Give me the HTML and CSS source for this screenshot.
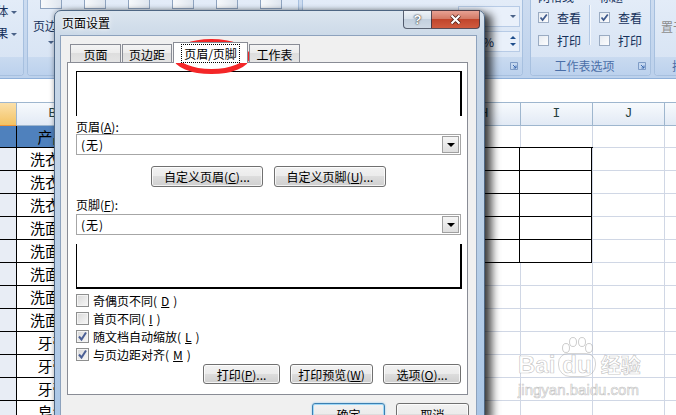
FILE: index.html
```html
<!DOCTYPE html>
<html lang="zh-CN">
<head>
  <meta charset="UTF-8" />
  <meta name="viewport" content="width=device-width, initial-scale=1" />
  <title>页面设置</title>
  <link rel="stylesheet" href="styles.css">
</head>
<body>
  <div class="excel">
    <div class="ribbon">
      <div class="group g-theme">
        <div class="group-body">
          <div class="small-btn">字体 <i class="drop"></i></div>
          <div class="small-btn">效果 <i class="drop"></i></div>
        </div>
        <div class="group-label">主题</div>
      </div>

      <div class="group g-page">
        <div class="group-body big-row">
          <div class="big-btn"><span class="big-icon"></span><span>页边距</span><i class="drop"></i></div>
          <div class="big-btn"><span class="big-icon"></span></div>
          <div class="big-btn"><span class="big-icon"></span></div>
          <div class="big-btn"><span class="big-icon"></span></div>
          <div class="big-btn"><span class="big-icon"></span></div>
          <div class="big-btn"><span class="big-icon"></span></div>
        </div>
        <div class="group-label"></div>
      </div>

      <div class="group g-fit">
        <div class="group-body fit-rows">
          <div class="fit-row"><span class="fit-box"><i class="drop"></i></span></div>
          <div class="fit-row"><span class="fit-box">100%<span class="spin"><i class="up"></i><i class="drop"></i></span></span></div>
        </div>
        <div class="group-label">
          <svg class="launcher" width="8" height="8"><path d="M0.5 0.5h7v7h-7z" fill="none" stroke="#7f9cc6"/><path d="M3 3l3 3M6 3.5V6H3.5" stroke="#3d6bb0" fill="none"/></svg>
        </div>
      </div>

      <div class="group g-sheet">
        <div class="group-body sheet-opts">
          <div class="opt-col">
            <div class="opt-title">网格线</div>
            <div class="rb-check"><span class="rb-box"><svg width="9" height="9"><path d="M1.5 4.5L3.6 7L7.8 1.5" fill="none" stroke="#3f5a8c" stroke-width="1.8"/></svg></span>查看</div>
            <div class="rb-check"><span class="rb-box"></span>打印</div>
          </div>
          <div class="opt-sep"></div>
          <div class="opt-col">
            <div class="opt-title">标题</div>
            <div class="rb-check"><span class="rb-box"><svg width="9" height="9"><path d="M1.5 4.5L3.6 7L7.8 1.5" fill="none" stroke="#3f5a8c" stroke-width="1.8"/></svg></span>查看</div>
            <div class="rb-check"><span class="rb-box"></span>打印</div>
          </div>
        </div>
        <div class="group-label label-sheet">工作表选项
          <svg class="launcher" width="8" height="8"><path d="M0.5 0.5h7v7h-7z" fill="none" stroke="#7f9cc6"/><path d="M3 3l3 3M6 3.5V6H3.5" stroke="#3d6bb0" fill="none"/></svg>
        </div>
      </div>

      <div class="group g-arrange">
        <div class="group-body arrange">置于顶层</div>
        <div class="group-label">排列</div>
      </div>
    </div>

    <div class="formula"></div>

    <div class="colheads">
      <span class="colhead sel">A</span>
      <span class="colhead">B</span>
      <span class="colhead">C</span>
      <span class="colhead">D</span>
      <span class="colhead">E</span>
      <span class="colhead">F</span>
      <span class="colhead">G</span>
      <span class="colhead">H</span>
      <span class="colhead">I</span>
      <span class="colhead">J</span>
      <span class="colhead">K</span>
    </div>

    <div class="cells">
      <div class="ruled">
        <span></span><span></span>
        <span></span><span></span>
        <span></span><span></span>
        <span></span><span></span>
        <span></span><span></span>
      </div>

      <span class="cell-a head-cell"></span><span class="cell-b head-cell">产品</span>
      <span class="cell-a"></span><span class="cell-b">洗衣粉</span>
      <span class="cell-a"></span><span class="cell-b">洗衣粉</span>
      <span class="cell-a"></span><span class="cell-b">洗衣粉</span>
      <span class="cell-a"></span><span class="cell-b">洗面奶</span>
      <span class="cell-a"></span><span class="cell-b">洗面奶</span>
      <span class="cell-a"></span><span class="cell-b">洗面奶</span>
      <span class="cell-a"></span><span class="cell-b">洗面奶</span>
      <span class="cell-a"></span><span class="cell-b">洗面奶</span>
      <span class="cell-a"></span><span class="cell-b">牙膏</span>
      <span class="cell-a"></span><span class="cell-b">牙膏</span>
      <span class="cell-a"></span><span class="cell-b">牙膏</span>
      <span class="cell-a"></span><span class="cell-b">皂角</span>
    </div>
  </div>

  <!-- watermark -->
  <div class="watermark">
    <div class="wm-logo">Bai<span class="wm-du">du<svg class="wm-toes" width="34" height="16"><ellipse cx="6" cy="11" rx="3.5" ry="4.5"/><ellipse cx="13" cy="5" rx="3.5" ry="4.5"/><ellipse cx="22" cy="5" rx="3.5" ry="4.5"/><ellipse cx="29" cy="11" rx="3.5" ry="4.5"/></svg></span><span class="wm-cn">经验</span></div>
    <div class="wm-url">jingyan.baidu.com</div>
  </div>

  <!-- dialog -->
  <div class="dialog">
    <div class="titlebar">
      <span class="title">页面设置</span>
      <div class="caption-btns">
        <span class="cap-help">?</span>
        <span class="cap-close"><svg width="13" height="11"><path d="M2.5 1.5l8 8M10.5 1.5l-8 8" stroke="#4a1a12" stroke-width="3.8"/><path d="M2.5 1.5l8 8M10.5 1.5l-8 8" stroke="#fff" stroke-width="2.2"/></svg></span>
      </div>
    </div>

    <div class="client">
      <div class="tabs">
        <span class="tab t-page">页面</span>
        <span class="tab t-margin">页边距</span>
        <span class="tab tab-active"><span class="focus">页眉/页脚</span></span>
        <span class="tab t-sheet">工作表</span>
      </div>

      <div class="panel">
        <div class="preview preview-head"></div>

        <div class="field-label">页眉(<u>A</u>):</div>
        <div class="combo"><span class="combo-text">(无)</span><span class="combo-btn"><i></i></span></div>

        <div class="custom-row">
          <button class="btn btn-custom">自定义页眉(<u>C</u>)...</button>
          <button class="btn btn-custom">自定义页脚(<u>U</u>)...</button>
        </div>

        <div class="field-label label-foot">页脚(<u>F</u>):</div>
        <div class="combo combo-foot"><span class="combo-text">(无)</span><span class="combo-btn"><i></i></span></div>

        <div class="preview preview-foot"></div>

        <div class="checks">
          <div class="check"><span class="box"></span>奇偶页不同(<u>D</u>)</div>
          <div class="check"><span class="box"></span>首页不同(<u>I</u>)</div>
          <div class="check"><span class="box"><svg width="11" height="11"><path d="M2 5.5L4.5 8.5L9 1.5" fill="none" stroke="#4a5f95" stroke-width="2"/></svg></span>随文档自动缩放(<u>L</u>)</div>
          <div class="check"><span class="box"><svg width="11" height="11"><path d="M2 5.5L4.5 8.5L9 1.5" fill="none" stroke="#4a5f95" stroke-width="2"/></svg></span>与页边距对齐(<u>M</u>)</div>
        </div>

        <div class="panel-btns">
          <button class="btn btn-print">打印(<u>P</u>)...</button>
          <button class="btn btn-preview">打印预览(<u>W</u>)</button>
          <button class="btn btn-options">选项(<u>O</u>)...</button>
        </div>
      </div>

      <div class="dialog-btns">
        <button class="btn btn-ok">确定</button>
        <button class="btn btn-cancel">取消</button>
      </div>
    </div>
  </div>

  <!-- red annotation -->
  <svg class="mark" width="84" height="42"><ellipse cx="41.5" cy="20.5" rx="36" ry="15" fill="none" stroke="#f42628" stroke-width="5"/></svg>
</body>
</html>
```

FILE: styles.css
```css
* {
  box-sizing: border-box;
}

body {
  margin: 0;
  width: 676px;
  height: 415px;
  overflow: hidden;
  position: relative;
  font-family: "Noto Sans CJK SC", "Liberation Sans", sans-serif;
  font-size: 12px;
  color: #000;
  background: #fff;
}

/* Ribbon */
.ribbon {
  height: 79px;
  display: flex;
  gap: 3px;
  padding-bottom: 2px;
  background: linear-gradient(#cddcf0, #bcd1ec);
  border-bottom: 1px solid #8fb0d9;
}

.group {
  display: flex;
  flex-direction: column;
  flex-shrink: 0;
  border: 1px solid #a7c0df;
  border-top: none;
  border-radius: 0 0 4px 4px;
  overflow: hidden;
  background: linear-gradient(#e3ecf8, #d5e2f3);
  color: #15305a;
}

.group-body {
  flex: 1;
}

.group-label {
  height: 18px;
  line-height: 17px;
  text-align: center;
  color: #4b6fa8;
  background: linear-gradient(#c9daf0, #bcd1ed);
  position: relative;
  white-space: nowrap;
}

.launcher {
  position: absolute;
  right: 4px;
  top: 5px;
}

.drop {
  display: inline-block;
  width: 0;
  height: 0;
  border-left: 3px solid transparent;
  border-right: 3px solid transparent;
  border-top: 3px solid #4a6288;
  vertical-align: middle;
}

.g-theme {
  width: 74px;
  margin-left: -50px;
}

.g-theme .group-body {
  padding-right: 6px;
  text-align: right;
}

.small-btn {
  line-height: 22px;
  white-space: nowrap;
}

.g-page {
  width: 272px;
}

.big-row {
  display: flex;
  gap: 4px;
  padding-left: 3px;
}

.big-btn {
  width: 40px;
  display: flex;
  flex-direction: column;
  align-items: center;
  white-space: nowrap;
}

.big-icon {
  width: 22px;
  height: 9px;
  margin-bottom: 10px;
  border: 1px solid #8ea3bf;
  border-top: none;
  background: linear-gradient(90deg, #f7f9fb, #dfe6ef);
}

.big-btn span:nth-child(2) {
  line-height: 14px;
}

.big-btn .drop {
  margin-top: 8px;
}

.g-fit {
  width: 221px;
}

.fit-rows {
  display: flex;
  flex-direction: column;
  align-items: flex-end;
  gap: 3px;
  padding: 5px 2px 0 0;
}

.fit-row {
  height: 22px;
  display: flex;
  align-items: center;
}

.fit-box {
  width: 62px;
  height: 21px;
  display: flex;
  align-items: center;
  justify-content: space-between;
  padding: 0 3px 0 4px;
  border: 1px solid #b7cbe6;
  background: #e9f0fa;
}

.fit-box > .drop:first-child {
  margin-left: auto;
}

.spin {
  display: flex;
  flex-direction: column;
  gap: 4px;
}

.spin .up {
  width: 0;
  height: 0;
  border-left: 3px solid transparent;
  border-right: 3px solid transparent;
  border-bottom: 3px solid #1f4e8c;
}

.spin .drop {
  border-top-color: #1f4e8c;
}

.g-sheet {
  width: 121px;
  margin-left: 4px;
}

.sheet-opts {
  display: flex;
}

.opt-col {
  display: flex;
  flex-direction: column;
  padding-left: 7px;
  width: 58px;
  white-space: nowrap;
}

.opt-col + .opt-sep + .opt-col {
  padding-left: 8px;
}

.opt-title {
  line-height: 12px;
  margin-top: -9px;
  margin-bottom: 3px;
}

.rb-check {
  height: 23px;
  display: flex;
  align-items: center;
  gap: 8px;
}

.rb-box {
  width: 11px;
  height: 11px;
  display: flex;
  align-items: center;
  justify-content: center;
  border: 1px solid #9aabc2;
  background: linear-gradient(135deg, #e6ebf1, #fdfdfe);
}

.opt-sep {
  width: 2px;
  height: 40px;
  margin-top: 5px;
  border-left: 1px solid #b3c8e4;
  border-right: 1px solid #f3f7fc;
}

.label-sheet {
  padding-right: 12px;
}

.g-arrange {
  width: 60px;
}

.arrange {
  padding: 18px 0 0 6px;
  color: #8d8d8d;
  white-space: nowrap;
}

/* Sheet */
.formula {
  height: 24px;
  border-bottom: 1px solid #9eb6ce;
}

.colheads {
  display: grid;
  grid-template-columns: 17px repeat(10, 72px);
  height: 23px;
}

.colhead {
  border-right: 1px solid #9eb6ce;
  border-bottom: 1px solid #9eb6ce;
  background: linear-gradient(#f7fafd, #e2eaf5);
  text-align: center;
  line-height: 22px;
  font-family: "Liberation Mono", monospace;
  font-size: 13px;
  color: #27413e;
}

.colhead.sel {
  background: linear-gradient(#fbe0aa, #f3c364);
  border-bottom-color: #f29536;
  color: transparent;
}

.cells {
  display: grid;
  grid-template-columns: 17px repeat(10, 72px);
  grid-template-rows: 22px;
  grid-auto-rows: 23px;
  height: 290px;
  background-image:
    repeating-linear-gradient(90deg, transparent 0 71px, #d0d7e5 71px 72px),
    repeating-linear-gradient(180deg, transparent 0 22px, #d0d7e5 22px 23px);
  background-position: 17px 0, 0 -1px;
}

.cell-a,
.cell-b {
  border-right: 1px solid #000;
  border-bottom: 1px solid #000;
}

.cell-a {
  grid-column: 1 / 2;
  background: #e8edf5;
}

.cell-b {
  grid-column: 2 / 3;
  background: #fff;
  text-align: center;
  font-size: 15px;
  line-height: 22px;
  white-space: nowrap;
  overflow: hidden;
}

.head-cell {
  background: #4f81bd;
  line-height: 21px;
}

.ruled {
  grid-column: 8 / 10;
  grid-row: 2 / 7;
  margin-top: -1px;
  display: grid;
  grid-template-columns: 71px 72px;
  grid-auto-rows: 23px;
  border-top: 1px solid #000;
}

.ruled span {
  border-right: 1px solid #000;
  border-bottom: 1px solid #000;
  background: #fff;
}

/* Watermark */
.watermark {
  position: absolute;
  left: 518px;
  top: 350px;
  color: #fff;
  -webkit-text-stroke: 0.7px rgba(110, 110, 110, 0.4);
  font-family: "Liberation Sans", sans-serif;
}

.wm-logo {
  font-size: 24px;
  font-weight: bold;
  line-height: 30px;
  white-space: nowrap;
}

.wm-du {
  position: relative;
  display: inline-block;
  margin-left: 3px;
  padding: 0 3px;
  border: 1.5px solid rgba(150, 150, 150, 0.4);
  border-radius: 10px 10px 12px 12px;
  line-height: 22px;
}

.wm-toes {
  position: absolute;
  left: 1px;
  top: -17px;
  fill: #fff;
  stroke: rgba(130, 130, 130, 0.4);
}

.wm-cn {
  margin-left: 5px;
  font-family: "Noto Sans CJK SC", sans-serif;
  font-size: 20px;
}

.wm-url {
  font-size: 15px;
  line-height: 18px;
  margin-top: 1px;
}

/* Dialog */
.dialog {
  position: absolute;
  left: 54px;
  top: 10px;
  width: 431px;
  height: 412px;
  display: flex;
  flex-direction: column;
  padding: 0 7px 0 5px;
  border: 1px solid #4e6784;
  border-radius: 7px 7px 0 0;
  background: linear-gradient(#dbe5ef, #cad8e7 28px, #b8cfe8 60%, #aac6e6);
  box-shadow: 9px 2px 9px -2px rgba(0, 0, 0, 0.7), 0 0 5px rgba(0, 0, 0, 0.35);
}

.titlebar {
  height: 27px;
  display: flex;
  align-items: flex-start;
}

.title {
  padding-left: 2px;
  line-height: 24px;
  text-shadow: 0 0 6px #fff, 0 0 3px #fff;
}

.caption-btns {
  display: flex;
  margin: -1px -3px 0 auto;
}

.cap-help,
.cap-close {
  height: 19px;
  display: flex;
  align-items: center;
  justify-content: center;
  border: 1px solid rgba(40, 50, 70, 0.75);
}

.cap-help {
  width: 28px;
  border-right: none;
  border-radius: 0 0 0 4px;
  background: linear-gradient(#eef3f8, #d6e0ea 50%, #c3d0de 50%, #cfdae6);
  color: #fff;
  font-family: "Liberation Sans", sans-serif;
  font-weight: bold;
  font-size: 13px;
  text-shadow: 0 0 2px #333, 0 0 1px #333;
}

.cap-close {
  width: 49px;
  border-radius: 0 0 4px 0;
  background: linear-gradient(#e8a193, #d47a66 45%, #c1452c 50%, #d05b3f);
}

.client {
  flex: 1;
  padding: 6px 8px 0 6px;
  background: #f0f0f0;
  border: 1px solid #8da2bd;
  border-bottom: none;
}

.tabs {
  height: 20px;
  display: flex;
  align-items: flex-end;
  gap: 1px;
  padding-left: 3px;
  position: relative;
  z-index: 1;
}

.tab {
  height: 18px;
  text-align: center;
  line-height: 17px;
  padding-top: 1px;
  border: 1px solid #898c95;
  border-bottom: none;
  background: linear-gradient(#f4f4f4, #ebebeb 50%, #dedede 50%, #e4e4e4);
}

.t-page { width: 51px; }
.t-margin { width: 50px; }
.t-sheet { width: 51px; }

.tab-active {
  width: 75px;
  height: 21px;
  margin-bottom: -1px;
  padding-top: 2px;
  background: #fff;
}

.focus {
  padding: 0 2px;
  line-height: 14px;
  outline: 1px dotted #000;
}

.panel {
  height: 333px;
  padding: 8px 5px 0 8px;
  border: 1px solid #898c95;
  background: #fff;
}

.preview {
  height: 45px;
  border-left: 1px solid #000;
  border-right: 2px solid #000;
}

.preview-head {
  border-top: 1px solid #000;
}

.preview-foot {
  margin-top: 9px;
  border-bottom: 2px solid #000;
}

.field-label {
  margin-top: 3px;
  line-height: 15px;
}

.label-foot {
  margin-top: 10px;
}

.combo {
  height: 21px;
  margin-right: 1px;
  display: flex;
  align-items: center;
  padding: 1px;
  border: 1px solid #a6a6a6;
}

.combo-foot {
  margin-top: 2px;
}

.combo-text {
  flex: 1;
  padding-left: 3px;
  letter-spacing: 1px;
}

.combo-btn {
  width: 17px;
  height: 17px;
  display: flex;
  align-items: center;
  justify-content: center;
  border: 1px solid #a0a0a0;
  background: linear-gradient(#f6f6f6, #dedede);
}

.combo-btn i {
  width: 0;
  height: 0;
  border-left: 4px solid transparent;
  border-right: 4px solid transparent;
  border-top: 4px solid #000;
}

.btn {
  font: inherit;
  font-size: 12px;
  height: 20px;
  padding: 0;
  color: #000;
  border: 1px solid #707070;
  border-radius: 3px;
  background: linear-gradient(#f2f2f2, #ebebeb 50%, #dddddd 50%, #cfcfcf);
  box-shadow: inset 0 0 0 1px rgba(255, 255, 255, 0.75);
  white-space: nowrap;
}

.custom-row {
  margin-top: 11px;
  display: flex;
  gap: 11px;
  padding-left: 75px;
}

.btn-custom {
  width: 112px;
  height: 21px;
}

.checks {
  margin-top: 2px;
}

.check {
  height: 18px;
  display: flex;
  align-items: center;
  gap: 4px;
}

.box {
  width: 13px;
  height: 13px;
  display: flex;
  align-items: center;
  justify-content: center;
  border: 1px solid #8e8f8f;
  background: linear-gradient(135deg, #d8d8d8, #f8f8f8);
  box-shadow: inset 0 0 0 1px #f4f4f4;
}

.panel-btns {
  margin-top: 1px;
  margin-right: 1px;
  display: flex;
  justify-content: flex-end;
  gap: 10px;
}

.btn-print { width: 77px; }
.btn-preview { width: 83px; }
.btn-options { width: 78px; }

.dialog-btns {
  margin: 8px -1px 0 0;
  display: flex;
  justify-content: flex-end;
  gap: 11px;
}

.btn-ok,
.btn-cancel {
  width: 73px;
  height: 23px;
  line-height: 20px;
}

.btn-ok {
  border-color: #3c7fb1;
  box-shadow: inset 0 0 0 1px #9fd8f7, 0 0 2px #7ec4ee;
}

/* Annotation */
.mark {
  position: absolute;
  left: 170px;
  top: 36px;
}
```
